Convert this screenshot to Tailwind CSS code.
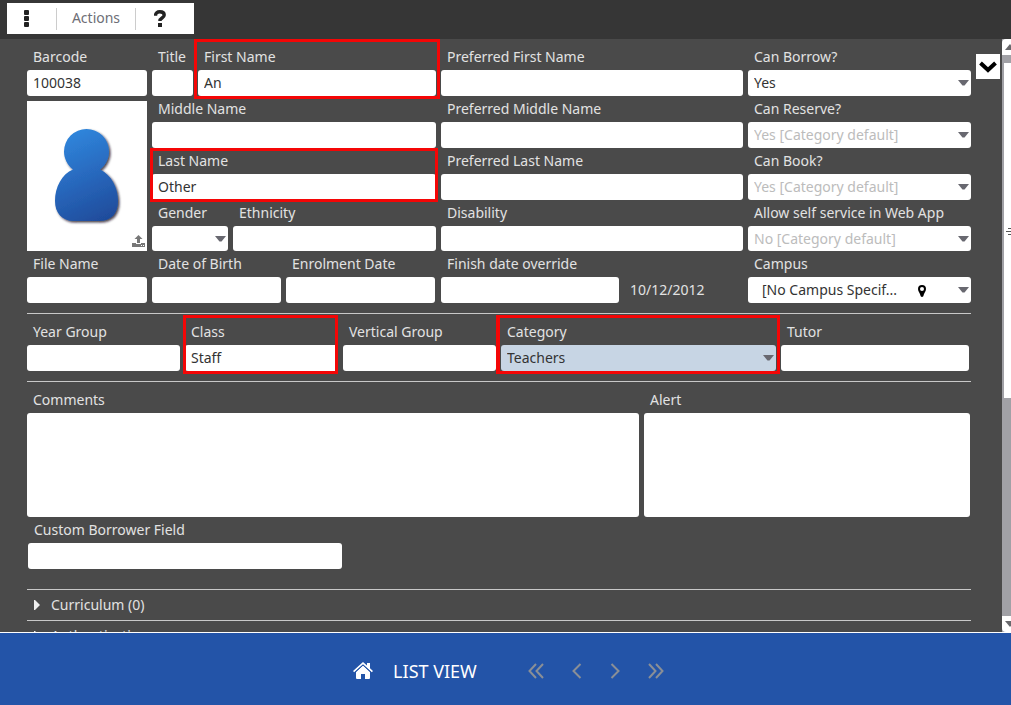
<!DOCTYPE html>
<html lang="en">
<head>
<meta charset="utf-8">
<meta name="viewport" content="width=device-width, initial-scale=1">
<title>Borrower details</title>
<script src="https://cdn.jsdelivr.net/npm/@tailwindcss/browser@4"></script>
</head>
<body class="flex h-screen flex-col overflow-hidden bg-[#4a4a4a] font-['Noto_Sans',sans-serif] text-sm text-[#e2e2e2]">
<svg class="hidden" aria-hidden="true">
  <symbol id="caret" viewBox="0 0 11 6"><path d="M0 0h11L6.500 5.500h-2z" fill="#686870"/></symbol>
</svg>

<header class="h-[39px] shrink-0 bg-[#363636] pt-[3px] pl-[7px]">
  <div class="flex h-[31px] w-[187px] items-center bg-white text-[#6e6e76]">
    <button type="button" aria-label="More" class="flex h-full w-[49px] items-center pl-[17px]">
      <svg width="5" height="17" viewBox="0 0 5 17" fill="#222"><rect width="5" height="5" rx="1"/><rect y="6" width="5" height="5" rx="1"/><rect y="12" width="5" height="5" rx="1"/></svg>
    </button>
    <button type="button" class="h-[22px] w-20 border-x border-[#ccc] pb-0.5 leading-5">Actions</button>
    <button type="button" aria-label="Help" class="flex h-full flex-1 items-center pl-[18px]">
      <svg width="12" height="17" viewBox="0 0 12 17" fill="none"><path d="M1.500 5.800C1.500 3 3.300 1.800 5.800 1.800c2.700 0 4.400 1.200 4.400 3.200 0 3.200-4.300 2.800-4.300 6" stroke="#222" stroke-width="3.400"/><path d="M4 13h4v4H4z" fill="#222"/></svg>
    </button>
  </div>
</header>

<main class="flex min-h-0 flex-1 overflow-hidden pl-[27px]">
  <form class="min-w-0 flex-1 pt-[5px]">
    <div class="grid grid-cols-[120fr_284fr_302fr_223fr] gap-x-[5px]">
      <div class="flex min-w-0 flex-col">
        <label for="barcode" class="h-[26px] pl-1.5 leading-[26px]">Barcode</label>
        <input id="barcode" value="100038" class="h-[26px] w-full rounded-[3px] bg-white px-1.5 pb-0.5 text-[#333]">
      </div>
      <div class="flex min-w-0 gap-[5px]">
        <div class="flex w-[41px] flex-col">
          <label for="title" class="h-[26px] pl-1.5 leading-[26px]">Title</label>
          <input id="title" class="h-[26px] w-full rounded-[3px] bg-white px-1.5 pb-0.5 text-[#333]">
        </div>
        <div class="relative flex min-w-0 flex-1 flex-col">
          <label for="first" class="h-[26px] pl-1.5 leading-[26px]">First Name</label>
          <input id="first" value="An" class="h-[26px] w-full rounded-[3px] bg-white px-1.5 pb-0.5 text-[#333]">
          <span class="pointer-events-none absolute -top-[5px] -right-1 -bottom-[3px] -left-1 z-10 border-3 border-[#f40606]"></span>
        </div>
      </div>
      <div class="flex min-w-0 flex-col">
        <label for="pfirst" class="h-[26px] pl-1.5 leading-[26px]">Preferred First Name</label>
        <input id="pfirst" class="h-[26px] w-full rounded-[3px] bg-white px-1.5 pb-0.5 text-[#333]">
      </div>
      <div class="flex min-w-0 flex-col">
        <label for="borrow" class="h-[26px] pl-1.5 leading-[26px]">Can Borrow?</label>
        <div class="relative">
          <select id="borrow" class="block h-[26px] w-full appearance-none rounded-[3px] bg-white px-1.5 text-[#333]"><option>Yes</option></select>
          <svg class="pointer-events-none absolute top-2.5 right-0.5 h-1.5 w-[11px]"><use href="#caret"/></svg>
        </div>
      </div>

      <div class="row-span-3 pt-[5px]">
        <div class="relative flex h-[150px] justify-center bg-white pt-6">
          <svg class="h-[104px] w-[76px]" viewBox="0 0 76 104" role="img" aria-label="Borrower photo">
            <defs>
              <linearGradient id="person" gradientUnits="userSpaceOnUse" x1="18" y1="5" x2="60" y2="98"><stop offset="0" stop-color="#3088de"/><stop offset=".5" stop-color="#2868bd"/><stop offset="1" stop-color="#1e4998"/></linearGradient>
              <filter id="shade" x="-20%" y="-20%" width="140%" height="140%"><feDropShadow dx="1.500" dy="1.500" stdDeviation="1.300" flood-color="#1a0a20" flood-opacity=".8"/></filter>
            </defs>
            <path d="M24 44.500C18 40 15 33 15 26.500a22.500 22.500 0 0 1 45 0C60 33 57 40 51 44.500c11 5 18 18 18 31.500 0 13-7 20-19 20H25C13 96 6 88 6 76c0-14 7-27 18-31.500Z" fill="url(#person)" filter="url(#shade)"/>
          </svg>
          <button type="button" aria-label="Upload photo" class="absolute right-0.5 bottom-1">
            <svg class="block" width="13" height="12" viewBox="0 0 13 12" fill="#777"><path d="M6.500 0 10.500 4H8v4H5V4H2.500z"/><path d="M0 8h4v1h5V8h4v4H0zm9 2v1h1v-1zm2 0v1h1v-1z" fill-rule="evenodd"/></svg>
          </button>
        </div>
      </div>
      <div class="flex min-w-0 flex-col">
        <label for="middle" class="h-[26px] pl-1.5 leading-[26px]">Middle Name</label>
        <input id="middle" class="h-[26px] w-full rounded-[3px] bg-white px-1.5 pb-0.5 text-[#333]">
      </div>
      <div class="flex min-w-0 flex-col">
        <label for="pmiddle" class="h-[26px] pl-1.5 leading-[26px]">Preferred Middle Name</label>
        <input id="pmiddle" class="h-[26px] w-full rounded-[3px] bg-white px-1.5 pb-0.5 text-[#333]">
      </div>
      <div class="flex min-w-0 flex-col">
        <label for="reserve" class="h-[26px] pl-1.5 leading-[26px]">Can Reserve?</label>
        <div class="relative">
          <select id="reserve" class="block h-[26px] w-full appearance-none rounded-[3px] bg-white px-1.5 text-[#bcbcbc]"><option>Yes [Category default]</option></select>
          <svg class="pointer-events-none absolute top-2.5 right-0.5 h-1.5 w-[11px]"><use href="#caret"/></svg>
        </div>
      </div>

      <div class="relative flex min-w-0 flex-col">
        <label for="last" class="h-[26px] pl-1.5 leading-[26px]">Last Name</label>
        <input id="last" value="Other" class="h-[26px] w-full rounded-[3px] bg-white px-1.5 pb-0.5 text-[#333]">
        <span class="pointer-events-none absolute top-0 -right-0.5 -bottom-0.5 -left-0.5 z-10 border-3 border-[#f40606]"></span>
      </div>
      <div class="flex min-w-0 flex-col">
        <label for="plast" class="h-[26px] pl-1.5 leading-[26px]">Preferred Last Name</label>
        <input id="plast" class="h-[26px] w-full rounded-[3px] bg-white px-1.5 pb-0.5 text-[#333]">
      </div>
      <div class="flex min-w-0 flex-col">
        <label for="book" class="h-[26px] pl-1.5 leading-[26px]">Can Book?</label>
        <div class="relative">
          <select id="book" class="block h-[26px] w-full appearance-none rounded-[3px] bg-white px-1.5 text-[#bcbcbc]"><option>Yes [Category default]</option></select>
          <svg class="pointer-events-none absolute top-2.5 right-0.5 h-1.5 w-[11px]"><use href="#caret"/></svg>
        </div>
      </div>

      <div class="flex min-w-0 gap-[5px]">
        <div class="flex w-[76px] flex-col">
          <label for="gender" class="h-[26px] pl-1.5 leading-[26px]">Gender</label>
          <div class="relative">
            <select id="gender" class="block h-[25px] w-full appearance-none rounded-[3px] bg-white px-1.5 text-[#333]"><option></option></select>
            <svg class="pointer-events-none absolute top-2.5 right-0.5 h-1.5 w-[11px]"><use href="#caret"/></svg>
          </div>
        </div>
        <div class="flex min-w-0 flex-1 flex-col">
          <label for="ethnicity" class="h-[26px] pl-1.5 leading-[26px]">Ethnicity</label>
          <input id="ethnicity" class="h-[25px] w-full rounded-[3px] bg-white px-1.5 pb-0.5 text-[#333]">
        </div>
      </div>
      <div class="flex min-w-0 flex-col">
        <label for="disability" class="h-[26px] pl-1.5 leading-[26px]">Disability</label>
        <input id="disability" class="h-[25px] w-full rounded-[3px] bg-white px-1.5 pb-0.5 text-[#333]">
      </div>
      <div class="flex min-w-0 flex-col">
        <label for="selfservice" class="h-[26px] pl-1.5 leading-[26px] whitespace-nowrap">Allow self service in Web App</label>
        <div class="relative">
          <select id="selfservice" class="block h-[25px] w-full appearance-none rounded-[3px] bg-white px-1.5 text-[#bcbcbc]"><option>No [Category default]</option></select>
          <svg class="pointer-events-none absolute top-2.5 right-0.5 h-1.5 w-[11px]"><use href="#caret"/></svg>
        </div>
      </div>

      <div class="flex min-w-0 flex-col">
        <label for="file" class="h-[26px] pl-1.5 leading-[26px]">File Name</label>
        <input id="file" class="h-[26px] w-full rounded-[3px] bg-white px-1.5 pb-0.5 text-[#333]">
      </div>
      <div class="flex min-w-0 gap-[5px] pr-px">
        <div class="flex w-[129px] flex-col">
          <label for="dob" class="h-[26px] pl-1.5 leading-[26px]">Date of Birth</label>
          <input id="dob" class="h-[26px] w-full rounded-[3px] bg-white px-1.5 pb-0.5 text-[#333]">
        </div>
        <div class="flex min-w-0 flex-1 flex-col">
          <label for="enrol" class="h-[26px] pl-1.5 leading-[26px]">Enrolment Date</label>
          <input id="enrol" class="h-[26px] w-full rounded-[3px] bg-white px-1.5 pb-0.5 text-[#333]">
        </div>
      </div>
      <div class="flex min-w-0 items-end gap-[11px]">
        <div class="flex w-[178px] flex-col">
          <label for="finish" class="h-[26px] pl-1.5 leading-[26px]">Finish date override</label>
          <input id="finish" class="h-[26px] w-full rounded-[3px] bg-white px-1.5 pb-0.5 text-[#333]">
        </div>
        <span class="leading-[26px]">10/12/2012</span>
      </div>
      <div class="flex min-w-0 flex-col">
        <label for="campus" class="h-[26px] pl-1.5 leading-[26px]">Campus</label>
        <div class="relative">
          <select id="campus" class="block h-[26px] w-full appearance-none rounded-[3px] bg-white px-3.5 text-[#333]"><option>[No Campus Specif...</option></select>
          <svg class="pointer-events-none absolute top-2 right-[45px]" width="8" height="12" viewBox="0 0 8 12"><path d="M4 0a4 4 0 0 1 4 4c0 2.500-2 4-2.700 7.200Q4 12.800 2.700 11.200C2 8 0 6.500 0 4a4 4 0 0 1 4-4Zm0 2a2 2 0 1 0 0 4 2 2 0 0 0 0-4Z"/></svg>
          <svg class="pointer-events-none absolute top-2.5 right-0.5 h-1.5 w-[11px]"><use href="#caret"/></svg>
        </div>
      </div>
    </div>

    <div class="mt-2.5 grid grid-cols-[153fr_153fr_153fr_275fr_188fr] gap-x-[5px] border-y border-[#c8c8c8] pt-[5px] pr-0.5 pb-2.5">
      <div class="flex min-w-0 flex-col">
        <label for="year" class="h-[26px] pl-1.5 leading-[26px]">Year Group</label>
        <input id="year" class="h-[26px] w-full rounded-[3px] bg-white px-1.5 pb-0.5 text-[#333]">
      </div>
      <div class="relative flex min-w-0 flex-col">
        <label for="class" class="h-[26px] pl-1.5 leading-[26px]">Class</label>
        <input id="class" value="Staff" class="h-[26px] w-full rounded-[3px] bg-white px-1.5 pb-0.5 text-[#333]">
        <span class="pointer-events-none absolute -top-1 right-0 -bottom-[3px] -left-0.5 z-10 border-3 border-[#f40606]"></span>
      </div>
      <div class="flex min-w-0 flex-col">
        <label for="vertical" class="h-[26px] pl-1.5 leading-[26px]">Vertical Group</label>
        <input id="vertical" class="h-[26px] w-full rounded-[3px] bg-white px-1.5 pb-0.5 text-[#333]">
      </div>
      <div class="relative flex min-w-0 flex-col">
        <label for="category" class="h-[26px] pl-1.5 leading-[26px]">Category</label>
        <div class="relative">
          <select id="category" class="block h-[26px] w-full appearance-none rounded-[3px] bg-[#c7d5e4] px-1.5 text-[#333]"><option>Teachers</option></select>
          <svg class="pointer-events-none absolute top-2.5 right-0.5 h-1.5 w-[11px]"><use href="#caret"/></svg>
        </div>
        <span class="pointer-events-none absolute -top-1 -right-1 -bottom-[3px] -left-[5px] z-10 border-3 border-l-4 border-[#f40606]"></span>
      </div>
      <div class="flex min-w-0 flex-col">
        <label for="tutor" class="h-[26px] pl-1.5 leading-[26px]">Tutor</label>
        <input id="tutor" class="h-[26px] w-full rounded-[3px] bg-white px-1.5 pb-0.5 text-[#333]">
      </div>
    </div>

    <div class="grid grid-cols-[612fr_326fr] gap-x-[5px] pt-[5px] pr-px">
      <div class="flex min-w-0 flex-col">
        <label for="comments" class="h-[26px] pl-1.5 leading-[26px]">Comments</label>
        <textarea id="comments" class="h-[104px] w-full resize-none rounded-[3px] bg-white px-1.5 text-[#333]"></textarea>
      </div>
      <div class="flex min-w-0 flex-col">
        <label for="alert" class="h-[26px] pl-1.5 leading-[26px]">Alert</label>
        <textarea id="alert" class="h-[104px] w-full resize-none rounded-[3px] bg-white px-1.5 text-[#333]"></textarea>
      </div>
    </div>

    <div class="flex flex-col pb-5 pl-px">
      <label for="custom" class="h-[26px] pl-1.5 leading-[26px]">Custom Borrower Field</label>
      <input id="custom" class="h-[26px] w-1/3 rounded-[3px] bg-white px-1.5 pb-0.5 text-[#333]">
    </div>

    <button type="button" aria-expanded="false" class="flex h-[31px] w-full items-center gap-[11px] border-t border-[#c8c8c8] pl-[7px]">
      <svg width="6" height="10" viewBox="0 0 6 10" fill="#eee"><path d="M0 0h1l5 5-5 5H0z"/></svg>Curriculum (0)
    </button>
    <button type="button" aria-expanded="false" class="flex h-[31px] w-full items-center gap-[11px] border-t border-[#c8c8c8] pl-[7px]">
      <svg width="6" height="10" viewBox="0 0 6 10" fill="#eee"><path d="M0 0h1l5 5-5 5H0z"/></svg>Authentication
    </button>
  </form>

  <button type="button" aria-label="Expand" class="mt-[15px] mr-0.5 ml-[5px] flex h-[25px] w-6 shrink-0 items-center justify-center bg-white">
    <svg width="18" height="12" viewBox="0 0 18 12" fill="none" stroke="#000" stroke-width="4"><path d="m1.500 2 7.500 7 7.500-7"/></svg>
  </button>

  <!-- Scroll track, cut off by the window edge -->
  <div class="flex w-[9px] shrink-0 flex-col overflow-hidden bg-[#a1a1a6]" aria-hidden="true">
    <div class="h-4 shrink-0 rounded-tl bg-white pt-[5px] pl-[3px]"><svg width="10" height="6" viewBox="0 0 10 6"><path d="M0 6 5 0l5 6z" fill="#68686c"/></svg></div>
    <div class="mt-2 ml-0.5 flex h-[335px] shrink-0 items-center bg-white pt-0.5 pl-0.5">
      <svg class="shrink-0" width="10" height="7" viewBox="0 0 10 7" stroke="#555"><path d="M2 .5h8M0 3.500h10M2 6.500h8"/></svg>
    </div>
    <div class="mt-auto h-4 shrink-0 rounded-bl bg-white pt-[5px] pl-[3px]"><svg width="10" height="6" viewBox="0 0 10 6"><path d="M0 0h10L5 6z" fill="#68686c"/></svg></div>
  </div>
</main>

<footer class="flex h-[73px] shrink-0 items-center justify-center border-t border-white bg-[#2354a8] pt-1 pl-1.5">
  <button type="button" class="flex items-center gap-5 text-lg text-white">
    <svg class="mb-0.5" width="20" height="17" viewBox="0 0 20 17" fill="#fff"><path d="M10 3.600 17 10v6q0 1-1 1h-4v-5H8v5H4q-1 0-1-1v-6z"/><path d="M10 0 14 3.500V1h3v5.200L20 9l-1.200 1.200L10 2.300 1.200 10.200 0 9z"/><path d="m1.800 10.400 8.200-7.300 8.200 7.300" fill="none" stroke="#2354a8"/></svg>
    LIST VIEW
  </button>
  <nav aria-label="Records" class="ml-[51px] flex items-center gap-7">
    <button type="button" aria-label="First"><svg class="block" width="16" height="16" viewBox="0 0 16 16" fill="none" stroke="#8a8f96" stroke-width="2"><path d="M8 1 1.500 8 8 15M15 1 8.500 8l6.500 7"/></svg></button>
    <button type="button" aria-label="Previous"><svg class="block" width="10" height="16" viewBox="0 0 10 16" fill="none" stroke="#8a8f96" stroke-width="2"><path d="M8.500 1 1.500 8l7 7"/></svg></button>
    <button type="button" aria-label="Next"><svg class="block" width="10" height="16" viewBox="0 0 10 16" fill="none" stroke="#8a8f96" stroke-width="2"><path d="m1.500 1 7 7-7 7"/></svg></button>
    <button type="button" aria-label="Last"><svg class="block" width="16" height="16" viewBox="0 0 16 16" fill="none" stroke="#8a8f96" stroke-width="2"><path d="m1 1 6.500 7L1 15M8 1l6.500 7L8 15"/></svg></button>
  </nav>
</footer>
</body>
</html>
